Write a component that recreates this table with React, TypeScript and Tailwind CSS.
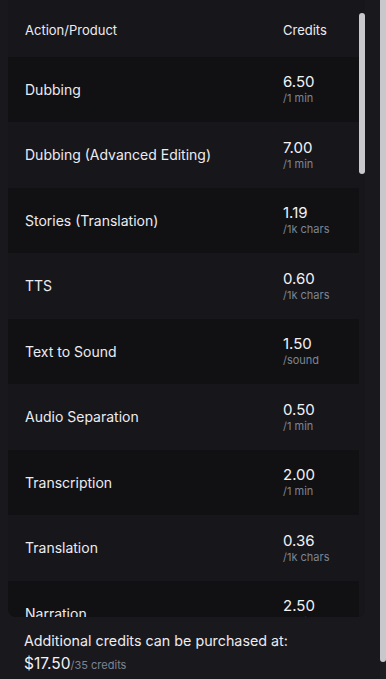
import React from "react";

type Rate = {
  name: string;
  credits: string;
  unit: string;
};

const rates: Rate[] = [
  { name: "Dubbing", credits: "6.50", unit: "/1 min" },
  { name: "Dubbing (Advanced Editing)", credits: "7.00", unit: "/1 min" },
  { name: "Stories (Translation)", credits: "1.19", unit: "/1k chars" },
  { name: "TTS", credits: "0.60", unit: "/1k chars" },
  { name: "Text to Sound", credits: "1.50", unit: "/sound" },
  { name: "Audio Separation", credits: "0.50", unit: "/1 min" },
  { name: "Transcription", credits: "2.00", unit: "/1 min" },
  { name: "Translation", credits: "0.36", unit: "/1k chars" },
  { name: "Narration", credits: "2.50", unit: "/1 min" },
];

function RateRow({ rate, dark }: { rate: Rate; dark: boolean }) {
  return (
    <div
      className={`flex h-[65.5px] shrink-0 items-center pl-[17px] ${
        dark ? "bg-[#111114]" : "bg-[#17161b]"
      }`}
    >
      <div className="flex-1 text-[14px] text-[#ececf0]">{rate.name}</div>
      <div className="flex w-[76px] flex-col">
        <span className="text-[15px] leading-[18px] text-[#f2f2f5]">{rate.credits}</span>
        <span className="text-[11px] leading-[14px] text-[#7c8594]">{rate.unit}</span>
      </div>
    </div>
  );
}

export default function App() {
  return (
    <div
      className="flex h-[679px] w-[386px] overflow-hidden bg-[#19181d]"
      style={{ fontFamily: "Inter, 'Noto Sans', sans-serif" }}
    >
      {/* panel content */}
      <div className="flex w-[380px] flex-col">
        <div className="ml-2 mr-[15px] flex h-[617px] overflow-hidden rounded-b-lg bg-[#17161b]">
          <div className="flex flex-1 flex-col overflow-hidden">
            {/* header */}
            <div className="flex h-[56.5px] shrink-0 items-center pl-[17px] pt-1 text-[13px] text-[#ececf0]">
              <div className="flex-1">Action/Product</div>
              <div className="w-[76px]">Credits</div>
            </div>
            {rates.map((r, i) => (
              <RateRow key={r.name} rate={r} dark={i % 2 === 0} />
            ))}
          </div>
          {/* table scrollbar */}
          <div className="w-[6px] shrink-0 bg-[#17161b] pt-[13px]">
            <div className="h-[161px] w-[6px] rounded-full bg-[#c9c9cd]" />
          </div>
        </div>

        {/* pricing note */}
        <div className="pl-6 pt-[13px]">
          <p className="text-[14.3px] leading-[22px] text-[#ececf0]">
            Additional credits can be purchased at:
          </p>
          <p className="leading-[22px]">
            <span className="text-[15.5px] text-[#f2f2f5]">$17.50</span>
            <span className="text-[11px] text-[#7c8594]">/35 credits</span>
          </p>
        </div>
      </div>

      {/* page scrollbar */}
      <div className="w-[6px] shrink-0 bg-[#1e1d22]">
        <div className="h-[662px] w-[6px] rounded-b-sm bg-[#c8c8cc]" />
      </div>
    </div>
  );
}
